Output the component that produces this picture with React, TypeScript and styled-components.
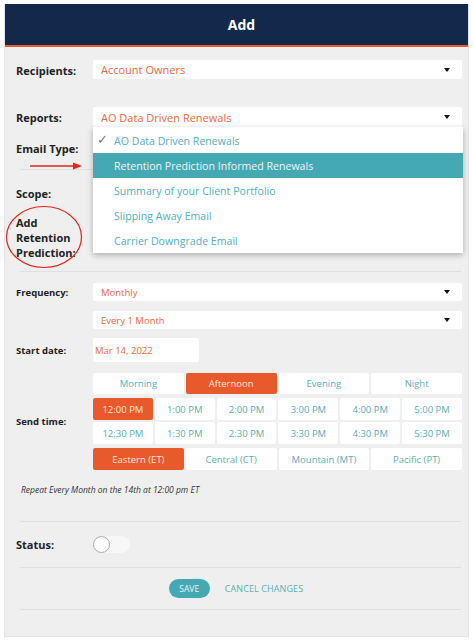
import React, { useState } from "react";
import styled, { createGlobalStyle } from "styled-components";

const GlobalStyle = createGlobalStyle`
    html, body {
        margin: 0;
        padding: 0;
        background: #ffffff;
        font-family: "Open Sans", "Liberation Sans", sans-serif;
    }
`;

const ORANGE = "#e85a2c";
const TEAL = "#45a9b3";
const NAVY = "#13294b";

const Panel = styled.div`
    position: relative;
    margin: 4px 0 0 4px;
    width: 465px;
    height: 633px;
    background: #efefef;
    box-sizing: border-box;
    border: 1px solid #e4e4e4;
    border-top: none;
`;

const Header = styled.div`
    height: 41px;
    background: ${NAVY};
    border-bottom: 2px solid ${ORANGE};
    display: flex;
    align-items: center;
    justify-content: center;
    padding-left: 10px;
    color: #ffffff;
    font-weight: 700;
    font-size: 14px;
`;

const Body = styled.div`
    padding: 0 6px 0 11px;
    display: flex;
    flex-direction: column;
`;

const Row = styled.div<{ $mt: number }>`
    display: flex;
    align-items: center;
    margin-top: ${(p) => p.$mt}px;
`;

const Label = styled.div<{ $small?: boolean }>`
    width: 77px;
    flex-shrink: 0;
    font-size: ${(p) => (p.$small ? 9.5 : 11)}px;
    font-weight: 700;
    color: #222;
    line-height: 15px;
`;

const Field = styled.div<{ $h?: number }>`
    flex: 1;
    position: relative;
    min-height: ${(p) => p.$h ?? 20}px;
`;

const SelectBox = styled.div<{ $h: number; $small?: boolean }>`
    height: ${(p) => p.$h}px;
    background: #ffffff;
    border-radius: 2px;
    display: flex;
    align-items: center;
    justify-content: space-between;
    padding: 0 12px 0 8px;
    color: #e8683f;
    font-size: ${(p) => (p.$small ? 9.5 : 11)}px;
`;

const Caret = styled.span`
    width: 0;
    height: 0;
    border-left: 3.5px solid transparent;
    border-right: 3.5px solid transparent;
    border-top: 4px solid #111;
`;

const Menu = styled.div`
    position: absolute;
    top: 100%;
    left: 0;
    right: -1px;
    background: #ffffff;
    box-shadow: 0 2px 6px rgba(0, 0, 0, 0.28);
    padding-top: 1px;
    z-index: 2;
`;

const MenuItem = styled.div<{ $active?: boolean }>`
    height: 25px;
    display: flex;
    align-items: center;
    padding-left: 21px;
    position: relative;
    font-size: 10.6px;
    color: ${(p) => (p.$active ? "#eaf6f7" : "#55aeb7")};
    background: ${(p) => (p.$active ? TEAL : "transparent")};
`;

const Check = styled.span`
    position: absolute;
    left: 4px;
    top: 4px;
    color: #777;
    font-size: 13px;
    font-family: "DejaVu Sans", sans-serif;
`;

const Separator = styled.div<{ $mt: number }>`
    height: 1px;
    background: #e0e0e0;
    margin: ${(p) => p.$mt}px 1px 0 4px;
`;

const DateBox = styled.div`
    width: 106px;
    height: 24px;
    background: #ffffff;
    border-radius: 2px;
    display: flex;
    align-items: center;
    padding-left: 2px;
    box-sizing: border-box;
    color: #e8683f;
    font-size: 9.5px;
`;

const TimeBlock = styled.div`
    flex: 1;
    display: flex;
    flex-direction: column;
`;

const Grid = styled.div<{ $cols: number; $h: number; $mt: number }>`
    display: grid;
    grid-template-columns: repeat(${(p) => p.$cols}, 1fr);
    column-gap: 2px;
    height: ${(p) => p.$h}px;
    margin-top: ${(p) => p.$mt}px;
`;

const Cell = styled.div<{ $on?: boolean }>`
    display: flex;
    align-items: center;
    justify-content: center;
    border-radius: 2px;
    font-size: 9.5px;
    background: ${(p) => (p.$on ? ORANGE : "#ffffff")};
    color: ${(p) => (p.$on ? "#fbe3da" : "#59aeb6")};
`;

const Repeat = styled.div`
    margin-top: 13px;
    padding-left: 5px;
    font-size: 8.5px;
    font-style: italic;
    line-height: 14px;
    color: #333;
`;

const Toggle = styled.div`
    width: 37px;
    height: 17px;
    border-radius: 9px;
    background: #f7f7f7;
    position: relative;
`;

const Knob = styled.div`
    position: absolute;
    left: 0;
    top: 0;
    width: 15px;
    height: 15px;
    border-radius: 50%;
    background: #ffffff;
    border: 1px solid #a9a9a9;
`;

const Actions = styled.div`
    display: flex;
    align-items: center;
    justify-content: center;
    gap: 15px;
    margin-top: 11px;
    padding-right: 6px;
`;

const SaveButton = styled.button`
    width: 41px;
    height: 19px;
    border: none;
    border-radius: 10px;
    background: ${TEAL};
    color: #e9f6f7;
    font-family: inherit;
    font-size: 8.5px;
    padding: 0;
`;

const CancelLink = styled.span`
    color: #5ab0b8;
    font-size: 9px;
    letter-spacing: 0.1px;
`;

const Annotation = styled.svg`
    position: absolute;
    left: 0;
    top: 0;
    pointer-events: none;
`;

const periods = ["Morning", "Afternoon", "Evening", "Night"];
const hours = ["12:00 PM", "1:00 PM", "2:00 PM", "3:00 PM", "4:00 PM", "5:00 PM"];
const halfHours = ["12:30 PM", "1:30 PM", "2:30 PM", "3:30 PM", "4:30 PM", "5:30 PM"];
const zones = ["Eastern (ET)", "Central (CT)", "Mountain (MT)", "Pacific (PT)"];
const reports = [
    "AO Data Driven Renewals",
    "Retention Prediction Informed Renewals",
    "Summary of your Client Portfolio",
    "Slipping Away Email",
    "Carrier Downgrade Email",
];

const App = () => {
    const [period, setPeriod] = useState("Afternoon");
    const [time, setTime] = useState("12:00 PM");
    const [zone, setZone] = useState("Eastern (ET)");

    return (
        <>
            <GlobalStyle />
            <Panel>
                <Header>Add</Header>
                <Body>
                    <Row $mt={13}>
                        <Label>Recipients:</Label>
                        <Field>
                            <SelectBox $h={19}>
                                Account Owners
                                <Caret />
                            </SelectBox>
                        </Field>
                    </Row>

                    <Row $mt={27}>
                        <Label>Reports:</Label>
                        <Field>
                            <SelectBox $h={20}>
                                AO Data Driven Renewals
                                <Caret />
                            </SelectBox>
                            <Menu>
                                {reports.map((r, i) => (
                                    <MenuItem key={r} $active={i === 1}>
                                        {i === 0 && <Check>✓</Check>}
                                        {r}
                                    </MenuItem>
                                ))}
                            </Menu>
                        </Field>
                    </Row>

                    <Row $mt={11}>
                        <Label>Email Type:</Label>
                        <Field />
                    </Row>
                    <Separator $mt={11} />

                    <Row $mt={13}>
                        <Label>Scope:</Label>
                        <Field />
                    </Row>

                    <Row $mt={12}>
                        <Label>
                            Add
                            <br />
                            Retention
                            <br />
                            Prediction:
                        </Label>
                        <Field />
                    </Row>
                    <Separator $mt={11} />

                    <Row $mt={11}>
                        <Label $small>Frequency:</Label>
                        <Field $h={18}>
                            <SelectBox $h={18} $small>
                                Monthly
                                <Caret />
                            </SelectBox>
                        </Field>
                    </Row>

                    <Row $mt={10}>
                        <Label $small />
                        <Field $h={18}>
                            <SelectBox $h={18} $small>
                                Every 1 Month
                                <Caret />
                            </SelectBox>
                        </Field>
                    </Row>

                    <Row $mt={9}>
                        <Label $small>Start date:</Label>
                        <Field $h={24}>
                            <DateBox>Mar 14, 2022</DateBox>
                        </Field>
                    </Row>

                    <Row $mt={11}>
                        <Label $small>Send time:</Label>
                        <TimeBlock>
                            <Grid $cols={4} $h={21} $mt={0}>
                                {periods.map((p) => (
                                    <Cell key={p} $on={p === period} onClick={() => setPeriod(p)}>
                                        {p}
                                    </Cell>
                                ))}
                            </Grid>
                            <Grid $cols={6} $h={22} $mt={4}>
                                {hours.map((t) => (
                                    <Cell key={t} $on={t === time} onClick={() => setTime(t)}>
                                        {t}
                                    </Cell>
                                ))}
                            </Grid>
                            <Grid $cols={6} $h={22} $mt={2}>
                                {halfHours.map((t) => (
                                    <Cell key={t} $on={t === time} onClick={() => setTime(t)}>
                                        {t}
                                    </Cell>
                                ))}
                            </Grid>
                            <Grid $cols={4} $h={22} $mt={4}>
                                {zones.map((z) => (
                                    <Cell key={z} $on={z === zone} onClick={() => setZone(z)}>
                                        {z}
                                    </Cell>
                                ))}
                            </Grid>
                        </TimeBlock>
                    </Row>

                    <Repeat>Repeat Every Month on the 14th at 12:00 pm ET</Repeat>
                    <Separator $mt={24} />

                    <Row $mt={14}>
                        <Label>Status:</Label>
                        <Toggle>
                            <Knob />
                        </Toggle>
                    </Row>
                    <Separator $mt={14} />

                    <Actions>
                        <SaveButton>SAVE</SaveButton>
                        <CancelLink>CANCEL CHANGES</CancelLink>
                    </Actions>
                    <Separator $mt={11} />
                </Body>

                {/* red review marks drawn over the form */}
                <Annotation width="465" height="633">
                    <line x1="25" y1="162" x2="70" y2="162" stroke="#e3241b" strokeWidth="1.3" />
                    <polygon points="77,162 68,158.5 68,165.5" fill="#e3241b" />
                    <ellipse cx="39" cy="233" rx="37.5" ry="30.5" fill="none" stroke="#e3241b" strokeWidth="1.2" />
                </Annotation>
            </Panel>
        </>
    );
};

export default App;
